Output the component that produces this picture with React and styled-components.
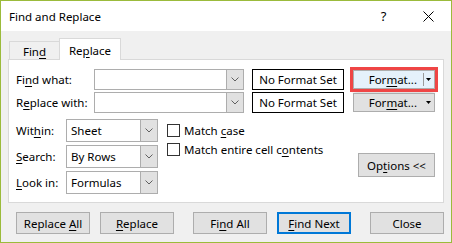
import styled, { createGlobalStyle } from 'styled-components';

const GlobalStyle = createGlobalStyle`
    html, body {
        margin: 0;
        padding: 0;
        background: #fff;
    }
    * {
        box-sizing: border-box;
    }
`;

const Window = styled.div`
    width: 452px;
    height: 243px;
    border: 1px solid #9bbb3b;
    background: #f0f0f0;
    display: flex;
    flex-direction: column;
    font-family: "Noto Sans", "Open Sans", sans-serif;
    font-size: 11.5px;
    color: #000;
`;

const TitleBar = styled.div`
    height: 30px;
    background: #fff;
    display: flex;
    align-items: center;
    padding-left: 8px;
`;

const Title = styled.div`
    flex: 1;
    font-size: 11.5px;
`;

const TitleButton = styled.div`
    width: 45px;
    height: 30px;
    display: flex;
    align-items: center;
    justify-content: center;
    font-size: 13px;
`;

const Body = styled.div`
    flex: 1;
    padding: 0 7px;
    display: flex;
    flex-direction: column;
`;

const TabStrip = styled.div`
    height: 28px;
    display: flex;
    align-items: flex-end;
    padding-left: 1px;
`;

const Tab = styled.div`
    width: ${p => p.$active ? '62px' : '50px'};
    height: ${p => p.$active ? '22px' : '18px'};
    margin-bottom: ${p => p.$active ? '-1px' : '0'};
    background: ${p => p.$active ? '#fff' : '#f0f0f0'};
    border: 1px solid #d9d9d9;
    border-bottom: none;
    border-right: ${p => p.$active ? '1px solid #d9d9d9' : 'none'};
    position: relative;
    z-index: 1;
    display: flex;
    justify-content: center;
    align-items: center;
    padding-top: ${p => p.$active ? '2px' : '1px'};
`;

const Panel = styled.div`
    height: 144px;
    background: #fff;
    border: 1px solid #d9d9d9;
    padding: 9px 8px 0 7px;
    display: flex;
    flex-direction: column;
`;

const FieldRows = styled.div`
    display: flex;
    flex-direction: column;
    gap: 2px;
`;

const FieldRow = styled.div`
    height: 21px;
    display: flex;
    align-items: center;
`;

const Label = styled.div`
    width: ${p => p.$w}px;
    flex: none;
`;

const Combo = styled.div`
    width: ${p => p.$w}px;
    height: ${p => p.$h}px;
    border: 1px solid #adadad;
    background: #fff;
    display: flex;
    flex: none;
`;

const ComboText = styled.div`
    flex: 1;
    padding-left: 4px;
    display: flex;
    align-items: center;
`;

const ComboButton = styled.div`
    width: 17px;
    background: #e1e1e1;
    border-left: 1px solid #adadad;
    display: flex;
    align-items: center;
    justify-content: center;
`;

const FormatBox = styled.div`
    width: 92px;
    height: 21px;
    margin-left: 8px;
    border: 1px solid #000;
    display: flex;
    align-items: center;
    justify-content: center;
    flex: none;
`;

const FormatButton = styled.div`
    width: 82px;
    height: 19px;
    margin-left: 9px;
    border: 1px solid #adadad;
    background: ${p => p.$marked ? '#e5f1fb' : '#e1e1e1'};
    box-shadow: ${p => p.$marked ? '0 0 0 3px #ef4545, 0 4px 4px -1px rgba(0,0,0,0.3)' : 'none'};
    display: flex;
    align-items: center;
    flex: none;
`;

const FormatLabel = styled.div`
    flex: 1;
    text-align: right;
    padding-right: 6px;
`;

const FormatArrow = styled.div`
    width: 10px;
    height: 13px;
    border-left: 1px solid ${p => p.$marked ? '#9a9a9a' : 'transparent'};
    display: flex;
    align-items: center;
    justify-content: center;
    margin-right: 1px;
`;

const Options = styled.div`
    margin-top: 6px;
    display: flex;
`;

const SelectGrid = styled.div`
    display: flex;
    flex-direction: column;
    gap: 3px;
`;

const SelectRow = styled.div`
    display: flex;
    align-items: center;
`;

const Checks = styled.div`
    margin-left: 9px;
    padding-top: 5px;
    display: flex;
    flex-direction: column;
    gap: 6px;
`;

const CheckRow = styled.div`
    height: 13px;
    display: flex;
    align-items: center;
    gap: 4px;
`;

const CheckBox = styled.div`
    width: 13px;
    height: 13px;
    border: 1px solid #333;
    background: #fff;
`;

const RightCol = styled.div`
    margin-left: auto;
    padding-top: 34px;
`;

const Button = styled.div`
    width: ${p => p.$w || 74}px;
    height: ${p => p.$h || 22}px;
    margin-left: ${p => p.$ml || 0}px;
    background: #e1e1e1;
    border: ${p => p.$default ? '2px solid #0078d7' : '1px solid #adadad'};
    display: flex;
    align-items: center;
    justify-content: center;
    flex: none;
`;

const Footer = styled.div`
    display: flex;
    padding: 9px 0 0 8px;
`;

const Key = styled.span`
    text-decoration: underline;
    text-underline-offset: 2px;
`;

const Chevron = () => (
    <svg width="8" height="5" viewBox="0 0 8 5">
        <polyline points="0.5,0.5 4,4 7.5,0.5" fill="none" stroke="#606060" strokeWidth="1" />
    </svg>
);

const Triangle = () => (
    <svg width="5" height="3" viewBox="0 0 5 3">
        <polygon points="0,0 5,0 2.5,3" fill="#000" />
    </svg>
);

const Close = () => (
    <svg width="11" height="11" viewBox="0 0 11 11">
        <path d="M0.5 0.5 L10.5 10.5 M10.5 0.5 L0.5 10.5" stroke="#000" strokeWidth="1" />
    </svg>
);

function ComboBox({ w, h, value }) {
    return (
        <Combo $w={w} $h={h}>
            <ComboText>{value}</ComboText>
            <ComboButton><Chevron /></ComboButton>
        </Combo>
    );
}

function FindRow({ label, marked }) {
    return (
        <FieldRow>
            <Label $w={78}>{label}</Label>
            <ComboBox w={150} h={21} value="" />
            <FormatBox>No Format Set</FormatBox>
            <FormatButton $marked={marked}>
                <FormatLabel>For<Key>m</Key>at...</FormatLabel>
                <FormatArrow $marked={marked}><Triangle /></FormatArrow>
            </FormatButton>
        </FieldRow>
    );
}

const SELECTS = [
    { label: <>Wit<Key>h</Key>in:</>, value: 'Sheet' },
    { label: <><Key>S</Key>earch:</>, value: 'By Rows' },
    { label: <><Key>L</Key>ook in:</>, value: 'Formulas' },
];

export default function App() {
    return (
        <>
            <GlobalStyle />
            <Window>
                <TitleBar>
                    <Title>Find and Replace</Title>
                    <TitleButton>?</TitleButton>
                    <TitleButton><Close /></TitleButton>
                </TitleBar>
                <Body>
                    <TabStrip>
                        <Tab><span>Fin<Key>d</Key></span></Tab>
                        <Tab $active><span>Re<Key>p</Key>lace</span></Tab>
                    </TabStrip>
                    <Panel>
                        <FieldRows>
                            <FindRow label={<>Fi<Key>n</Key>d what:</>} marked />
                            <FindRow label={<>R<Key>e</Key>place with:</>} />
                        </FieldRows>
                        <Options>
                            <SelectGrid>
                                {SELECTS.map((s, i) => (
                                    <SelectRow key={i}>
                                        <Label $w={50}>{s.label}</Label>
                                        <ComboBox w={92} h={23} value={s.value} />
                                    </SelectRow>
                                ))}
                            </SelectGrid>
                            <Checks>
                                <CheckRow><CheckBox /><span>Match <Key>c</Key>ase</span></CheckRow>
                                <CheckRow><CheckBox /><span>Match entire cell c<Key>o</Key>ntents</span></CheckRow>
                            </Checks>
                            <RightCol>
                                <Button $w={77} $h={24}><span>Op<Key>t</Key>ions &lt;&lt;</span></Button>
                            </RightCol>
                        </Options>
                    </Panel>
                    <Footer>
                        <Button><span>Replace <Key>A</Key>ll</span></Button>
                        <Button $ml={10}><span><Key>R</Key>eplace</span></Button>
                        <Button $ml={19}><span>Fi<Key>n</Key>d All</span></Button>
                        <Button $ml={10} $default><span><Key>F</Key>ind Next</span></Button>
                        <Button $ml={19}>Close</Button>
                    </Footer>
                </Body>
            </Window>
        </>
    );
}
